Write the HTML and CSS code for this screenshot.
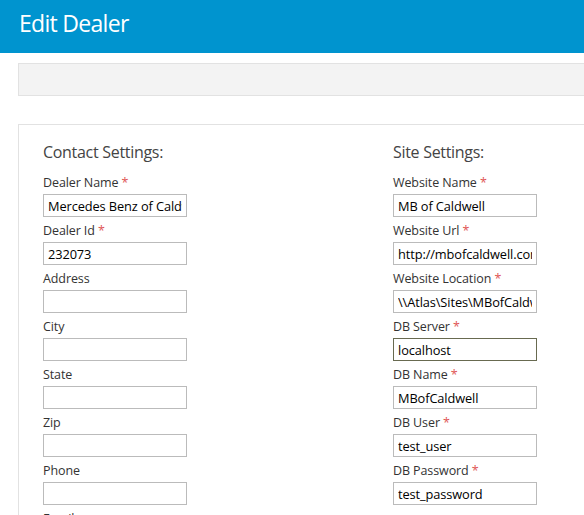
FILE: index.html
```html
<!DOCTYPE html>
<html>
<head>
<meta charset="utf-8">
<link rel="stylesheet" href="styles.css">
</head>
<body>
<header class="topbar"><h1 class="title">Edit Dealer</h1></header>
<main class="main">
  <div class="toolbar"></div>
  <section class="card">
    <div class="columns">
      <div class="col">
        <h2 class="heading">Contact Settings:</h2>
        <label class="label">Dealer Name <span class="req">*</span></label>
        <input class="field" type="text" value="Mercedes Benz of Caldwell">
        <label class="label">Dealer Id <span class="req">*</span></label>
        <input class="field" type="text" value="232073">
        <label class="label">Address</label>
        <input class="field" type="text" value="">
        <label class="label">City</label>
        <input class="field" type="text" value="">
        <label class="label">State</label>
        <input class="field" type="text" value="">
        <label class="label">Zip</label>
        <input class="field" type="text" value="">
        <label class="label">Phone</label>
        <input class="field" type="text" value="">
        <label class="label">Email</label>
        <input class="field" type="text" value="">
      </div>
      <div class="col">
        <h2 class="heading">Site Settings:</h2>
        <label class="label">Website Name <span class="req">*</span></label>
        <input class="field" type="text" value="MB of Caldwell">
        <label class="label">Website Url <span class="req">*</span></label>
        <input class="field" type="text" value="http://mbofcaldwell.com">
        <label class="label">Website Location <span class="req">*</span></label>
        <input class="field" type="text" value="\\Atlas\Sites\MBofCaldwell">
        <label class="label">DB Server <span class="req">*</span></label>
        <input class="field field-active" type="text" value="localhost">
        <label class="label">DB Name <span class="req">*</span></label>
        <input class="field" type="text" value="MBofCaldwell">
        <label class="label">DB User <span class="req">*</span></label>
        <input class="field" type="text" value="test_user">
        <label class="label">DB Password <span class="req">*</span></label>
        <input class="field" type="text" value="test_password">
      </div>
    </div>
  </section>
</main>
</body>
</html>
```
FILE: styles.css
```css
html, body {
  margin: 0;
  padding: 0;
  background: #fff;
  overflow: hidden;
}
body {
  font-family: "Open Sans", "Noto Sans", sans-serif;
  color: #333;
  width: 584px;
}
.topbar {
  background: #0094cf;
  height: 53px;
  padding-left: 19px;
  box-sizing: border-box;
}
.title {
  margin: 0;
  color: #fff;
  font-weight: 400;
  font-size: 23px;
  line-height: 47px;
  letter-spacing: -0.7px;
}
.main {
  padding: 10px 0 0 18px;
}
.toolbar {
  height: 31px;
  background: #f3f3f3;
  border: 1px solid #e2e2e2;
  border-right: none;
  margin-right: -20px;
}
.card {
  margin-top: 28px;
  border: 1px solid #e2e2e2;
  border-right: none;
  margin-right: -20px;
  padding: 15px 0 0 24px;
  height: 500px;
}
.columns {
  display: grid;
  grid-template-columns: 350px 200px;
}
.col {
  display: flex;
  flex-direction: column;
  align-items: flex-start;
}
.heading {
  margin: 0 0 5px;
  font-weight: 400;
  font-size: 16px;
  line-height: 24px;
  letter-spacing: -0.3px;
  color: #444;
}
.label {
  display: block;
  font-size: 12.5px;
  line-height: 18px;
  padding: 5px 0 2px;
  color: #333;
  letter-spacing: -0.1px;
}
.req {
  color: #e05555;
}
.field {
  box-sizing: border-box;
  width: 144px;
  height: 23px;
  margin: 0;
  border: 1px solid #bbb;
  padding: 0 4px;
  font-family: "Open Sans", "Noto Sans", sans-serif;
  font-size: 12.8px;
  letter-spacing: -0.1px;
  color: #000;
  background: #fff;
  outline: none;
}
.field-active {
  border-color: #686a50;
}
```
